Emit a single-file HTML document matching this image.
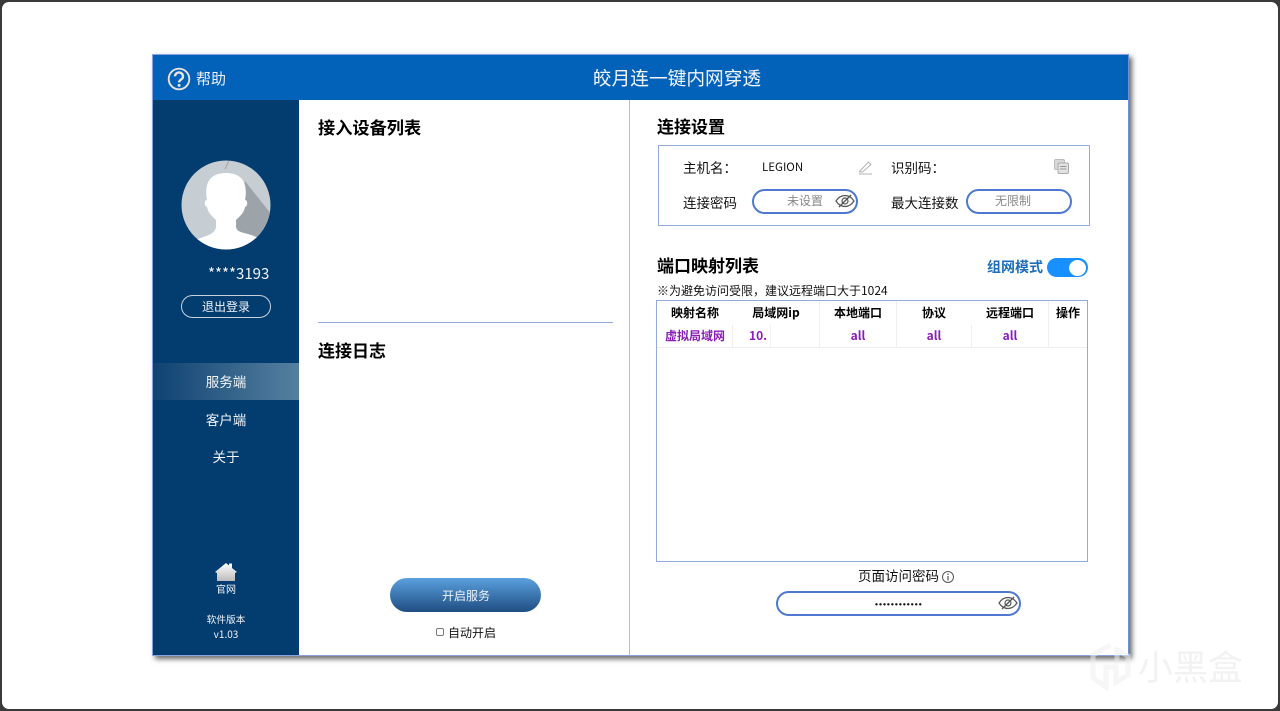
<!DOCTYPE html>
<html><head><meta charset="utf-8"><style>
html,body{margin:0;padding:0;width:1280px;height:711px;overflow:hidden;background:#3a3a3a}
*{box-sizing:border-box}
body{font-family:"Noto Sans CJK SC","Liberation Sans",sans-serif;color:#111}
.t{position:absolute;white-space:nowrap;line-height:1;}
.b{font-weight:700;color:#000}
.c{transform:translateX(-50%)}
#win{position:absolute;left:2px;top:2px;width:1276px;height:707px;background:#fff;border-radius:7px}
#app{position:absolute;left:152px;top:54px;width:977px;height:602px;background:#fff;box-shadow:3px 3px 5px rgba(0,0,0,.6);border:1px solid #8aa3de;border-right-color:#6f8fd0}
.abs{position:absolute}
.pill{position:absolute;border:2px solid #4f78d0;border-radius:15px;background:#fff}
</style></head><body>
<div id="win"></div>
<div id="app"></div>
<div class="abs" style="left:153px;top:55px;width:975px;height:45px;background:#0261b8"></div>
<div class="abs" style="left:153px;top:100px;width:146px;height:555px;background:#033c6e"></div>
<div class="abs" style="left:153px;top:363px;width:146px;height:37px;background:linear-gradient(90deg,#0f4272,#55809f)"></div>
<div class="abs" style="left:629px;top:100px;width:1px;height:555px;background:#bdbdbd"></div>
<div class="abs" style="left:318px;top:322px;width:295px;height:1px;background:#93a9de"></div>

<svg class="abs" style="left:167px;top:67px" width="24" height="24" viewBox="0 0 24 24"><circle cx="12" cy="12" r="10.300" fill="none" stroke="#e6e3dc" stroke-width="1.900"/><path d="M8 9.300a4 3.800 0 1 1 6.400 3c-1.500 1-2.300 1.600-2.300 3.100" fill="none" stroke="#e6e3dc" stroke-width="2.400"/><circle cx="12.100" cy="18.400" r="1.500" fill="#e6e3dc"/></svg>
<div class="t" style="left:196px;top:71px;font-size:15px;color:#eef2f7">帮助</div>
<div class="t c" style="left:677px;top:69px;font-size:18.700px;color:#f2f5fa">皎月连一键内网穿透</div>

<svg class="abs" style="left:181px;top:160px" width="90" height="90" viewBox="0 0 90 90"><defs><clipPath id="cp"><circle cx="45" cy="45" r="44.500"/></clipPath></defs><g clip-path="url(#cp)"><rect width="90" height="90" fill="#c6ced4"/><path d="M64 21L90 54V95H40Z" fill="#9ca4a9"/><path d="M8 84C17 76 35 77 35 66V60C31 56 27 53 26 47 23 46 23 40 26 40 24 30 24 13 45 13 66 13 66 30 64 40 67 40 67 46 64 47 63 53 59 56 55 60V66C55 75 68 71 80 80L70 95H20Z" fill="#fff"/><path d="M48 1L44 9" stroke="#a8a49e" stroke-width="1"/></g></svg>
<div class="t" style="left:208px;top:266px;font-size:15px;color:#f1f4f8">****3193</div>
<div class="abs" style="left:181px;top:295px;width:90px;height:23px;border:1px solid #c5d2df;border-radius:12px"></div>
<div class="t c" style="left:226px;top:301px;font-size:12px;color:#f1f4f8">退出登录</div>
<div class="t c" style="left:226px;top:375px;font-size:13.500px;color:#f1f4f8">服务端</div>
<div class="t c" style="left:226px;top:413px;font-size:13.500px;color:#f1f4f8">客户端</div>
<div class="t c" style="left:226px;top:450px;font-size:13.500px;color:#f1f4f8">关于</div>
<svg class="abs" style="left:214px;top:562px" width="24" height="20" viewBox="0 0 24 20"><defs><linearGradient id="h" x1="0" y1="0" x2="0" y2="1"><stop offset="0" stop-color="#fff"/><stop offset="1" stop-color="#bbb"/></linearGradient></defs><path d="M1 10L12 1 15 3.500V1.500H18V6L23 10 21 11V19H3V11Z" fill="url(#h)"/></svg>
<div class="t c" style="left:226px;top:584px;font-size:10px;color:#eef2f7">官网</div>
<div class="t c" style="left:226px;top:615px;font-size:9.700px;color:#eef2f7">软件版本</div>
<div class="t c" style="left:226px;top:629px;font-size:10px;color:#eef2f7">v1.03</div>

<div class="t b" style="left:318px;top:118px;font-size:17.200px">接入设备列表</div>
<div class="t b" style="left:318px;top:341px;font-size:17px">连接日志</div>
<div class="abs" style="left:390px;top:578px;width:151px;height:34px;border-radius:17px;background:linear-gradient(180deg,#5aa0de,#1f4d82)"></div>
<div class="t c" style="left:466px;top:590px;font-size:12px;color:#eef3f8">开启服务</div>
<div class="abs" style="left:436px;top:628px;width:8px;height:8px;border:1px solid #777;border-radius:2px"></div>
<div class="t" style="left:448px;top:627px;font-size:12px">自动开启</div>

<div class="t b" style="left:657px;top:117px;font-size:17px">连接设置</div>
<div class="abs" style="left:658px;top:145px;width:432px;height:81px;border:1px solid #93a9de"></div>
<div class="t" style="left:683px;top:161px;font-size:13.500px">主机名：</div>
<div class="t" style="left:762px;top:162px;font-size:11.500px">LEGION</div>
<svg class="abs" style="left:858px;top:160px" width="15" height="15" viewBox="0 0 15 15"><path d="M1.500 11.500L10.500 2 13 4.500 4.500 12H1.500ZM1 14H14" fill="none" stroke="#b5b5b5" stroke-width="1"/></svg>
<div class="t" style="left:891px;top:161px;font-size:13.500px">识别码：</div>
<svg class="abs" style="left:1053px;top:158px" width="17" height="17" viewBox="0 0 17 17"><rect x="1.500" y="1.500" width="10" height="10" rx="1.500" fill="#d8d8d8" stroke="#bbb"/><rect x="5" y="5" width="10.500" height="10.500" rx="1.500" fill="#e2e2e2" stroke="#aaa"/><path d="M7 8.500H13.500M7 11H13.500" stroke="#999"/></svg>
<div class="t" style="left:683px;top:196px;font-size:13.500px">连接密码</div>
<div class="pill" style="left:752px;top:189px;width:106px;height:25px"></div>
<div class="t" style="left:787px;top:195px;font-size:12px;color:#888">未设置</div>
<svg class="abs" style="left:835px;top:193px" width="20" height="16" viewBox="0 0 20 16"><path d="M1 8C4 3.500 7 2.500 10 2.500S16 3.500 19 8C16 12.500 13 13.500 10 13.500S4 12.500 1 8Z" fill="none" stroke="#555" stroke-width="1.200"/><circle cx="10" cy="8" r="3" fill="none" stroke="#555" stroke-width="1.200"/><path d="M4 14L16 2" stroke="#555" stroke-width="1.300"/></svg>
<div class="t" style="left:891px;top:196px;font-size:13.500px">最大连接数</div>
<div class="pill" style="left:966px;top:189px;width:106px;height:25px"></div>
<div class="t c" style="left:1013px;top:195px;font-size:12px;color:#888">无限制</div>

<div class="t b" style="left:657px;top:256px;font-size:17px">端口映射列表</div>
<div class="t b" style="left:987px;top:260px;font-size:14px;color:#1c6fba">组网模式</div>
<div class="abs" style="left:1047px;top:258px;width:41px;height:19px;border-radius:10px;background:#1890ff"></div>
<div class="abs" style="left:1069px;top:259.500px;width:17px;height:16px;border-radius:50%;background:#fff"></div>
<div class="t" style="left:657px;top:285px;font-size:12px">※为避免访问受限，建议远程端口大于1024</div>

<div class="abs" style="left:656px;top:300px;width:432px;height:262px;border:1px solid #93a9de"></div>
<div class="abs" style="left:657px;top:347px;width:430px;height:1px;background:#eee"></div>
<div class="abs" style="left:732px;top:325px;width:1px;height:22px;background:#eee"></div>
<div class="abs" style="left:770px;top:325px;width:1px;height:22px;background:#f2f2f2"></div>
<div class="abs" style="left:819px;top:301px;width:1px;height:46px;background:#eee"></div>
<div class="abs" style="left:896px;top:301px;width:1px;height:46px;background:#eee"></div>
<div class="abs" style="left:971px;top:325px;width:1px;height:22px;background:#eee"></div>
<div class="abs" style="left:1048px;top:301px;width:1px;height:46px;background:#eee"></div>
<div class="t c b" style="left:695px;top:307px;font-size:12px">映射名称</div>
<div class="t c b" style="left:776px;top:307px;font-size:12px">局域网ip</div>
<div class="t c b" style="left:858px;top:307px;font-size:12px">本地端口</div>
<div class="t c b" style="left:934px;top:307px;font-size:12px">协议</div>
<div class="t c b" style="left:1010px;top:307px;font-size:12px">远程端口</div>
<div class="t c b" style="left:1068px;top:307px;font-size:12px">操作</div>
<div class="t c b" style="left:695px;top:330px;font-size:12px;color:#8a1cb8">虚拟局域网</div>
<div class="t b" style="left:749px;top:330px;font-size:12px;color:#8a1cb8">10.</div>
<div class="t c b" style="left:858px;top:330px;font-size:12px;color:#8a1cb8">all</div>
<div class="t c b" style="left:934px;top:330px;font-size:12px;color:#8a1cb8">all</div>
<div class="t c b" style="left:1010px;top:330px;font-size:12px;color:#8a1cb8">all</div>

<div class="t" style="left:858px;top:569px;font-size:13.500px">页面访问密码</div>
<svg class="abs" style="left:941px;top:570px" width="14" height="14" viewBox="0 0 14 14"><circle cx="7" cy="7" r="5.500" fill="none" stroke="#555"/><path d="M7 6V10.500M7 3.500V5" stroke="#555" stroke-width="1.200"/></svg>
<div class="pill" style="left:776px;top:591px;width:245px;height:25px"></div>
<div class="t" style="left:875px;top:600px;font-size:8.500px;letter-spacing:1px;font-weight:700;font-family:'Liberation Sans',sans-serif">••••••••••••</div>
<svg class="abs" style="left:998px;top:595px" width="20" height="16" viewBox="0 0 20 16"><path d="M1 8C4 3.500 7 2.500 10 2.500S16 3.500 19 8C16 12.500 13 13.500 10 13.500S4 12.500 1 8Z" fill="none" stroke="#555" stroke-width="1.200"/><circle cx="10" cy="8" r="3" fill="none" stroke="#555" stroke-width="1.200"/><path d="M4 14L16 2" stroke="#555" stroke-width="1.300"/></svg>

<svg class="abs" style="left:1088px;top:640px" width="46" height="54" viewBox="0 0 46 54"><path d="M22 5L5 15V38L18 47V27H28V42L40 35V16L29 10V21" fill="none" stroke="#eeeeee" stroke-opacity=".55" stroke-width="5"/></svg>
<div class="t" style="left:1138px;top:648px;font-size:35px;color:#e8e8e8;opacity:.55">小黑盒</div>
</body></html>
